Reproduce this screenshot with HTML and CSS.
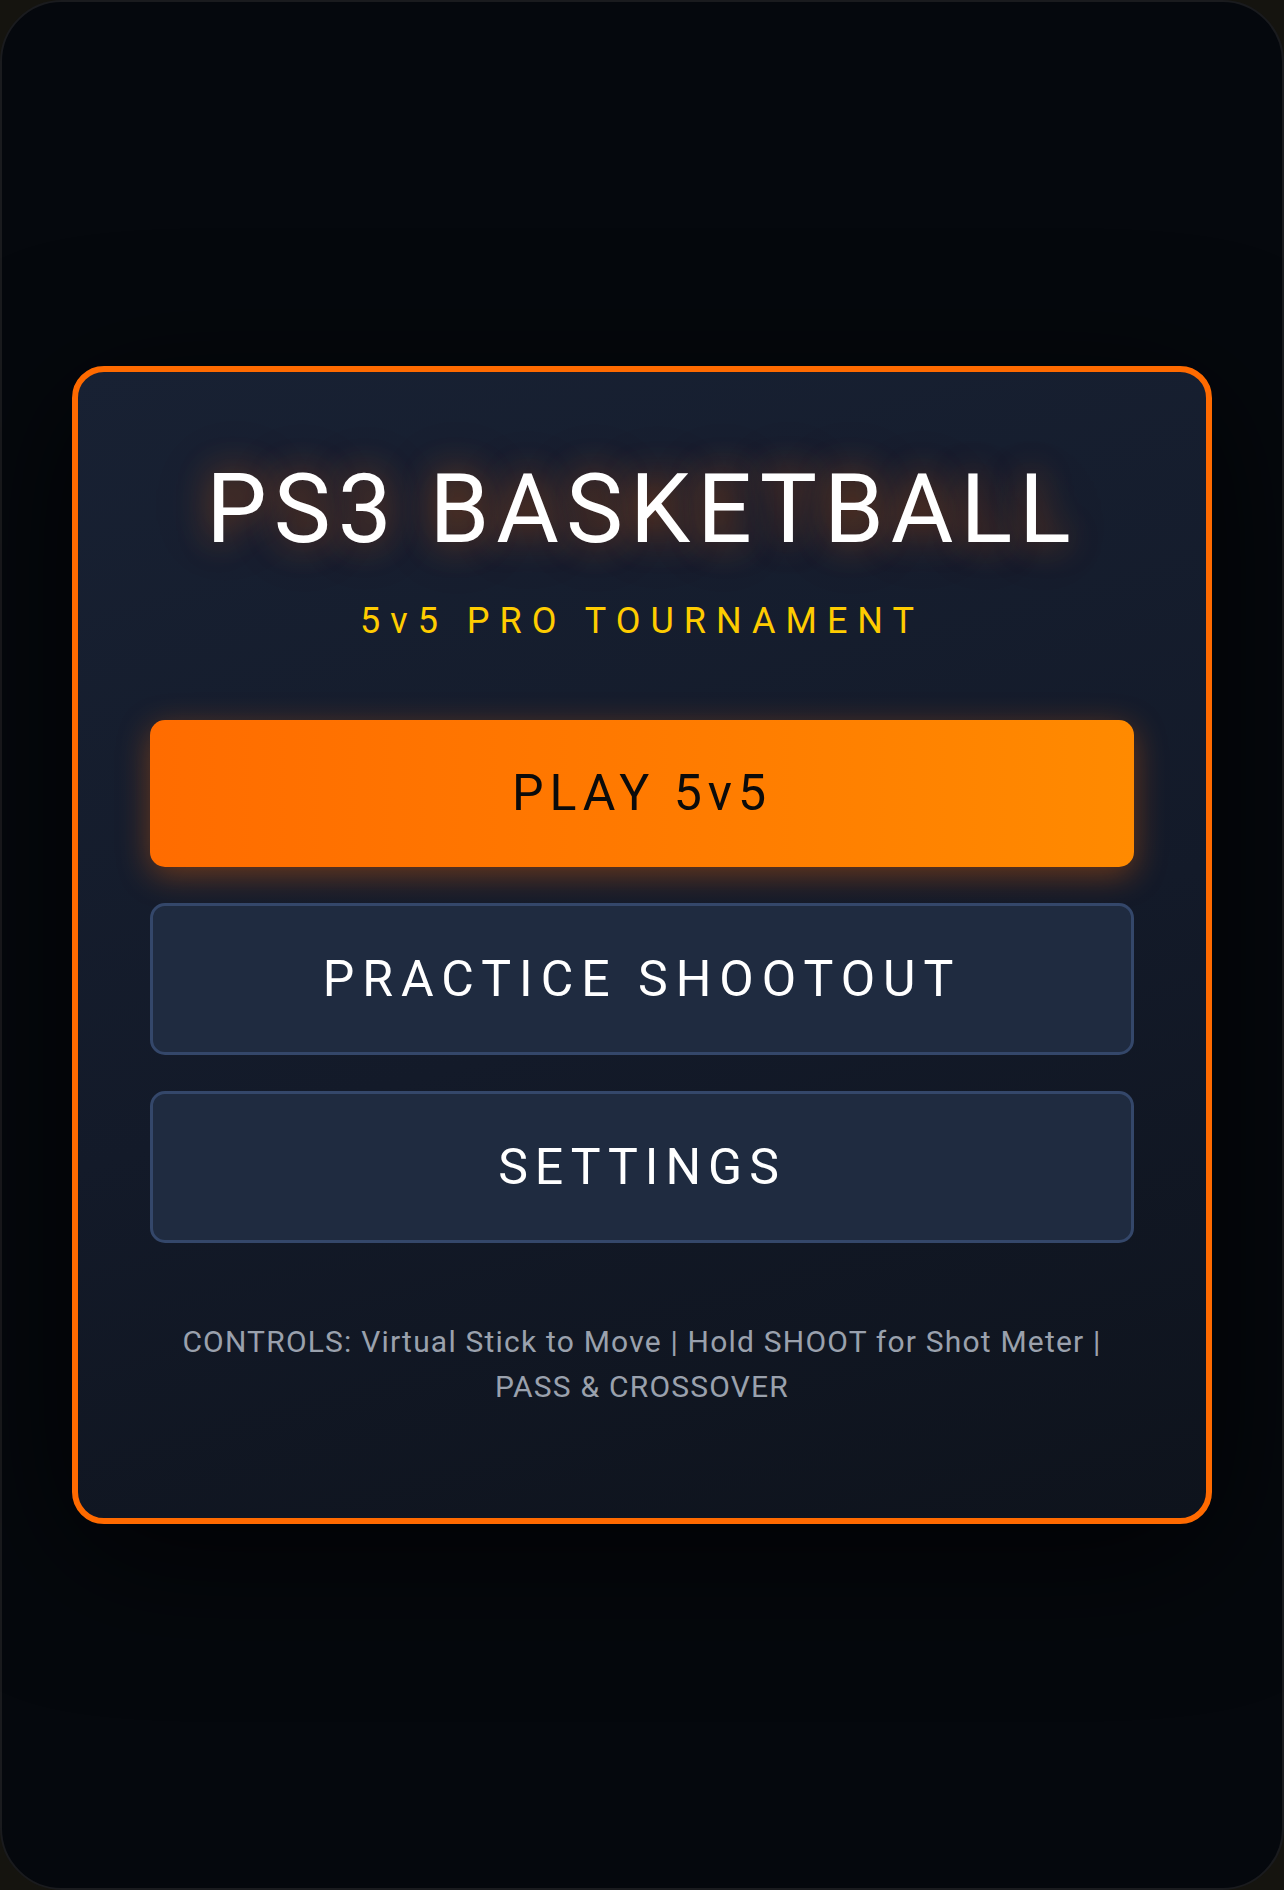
FILE: index.html
```html
<!DOCTYPE html>
<html lang="en">
<head>
<meta charset="utf-8">
<title>PS3 Basketball</title>
<link rel="stylesheet" href="styles.css">
</head>
<body>
<div class="screen">
  <main class="menu-card">
    <h1 class="title">PS3 BASKETBALL</h1>
    <p class="subtitle">5v5 PRO TOURNAMENT</p>
    <div class="menu-buttons">
      <button class="btn btn-primary">PLAY 5v5</button>
      <button class="btn btn-secondary">PRACTICE SHOOTOUT</button>
      <button class="btn btn-secondary">SETTINGS</button>
    </div>
    <p class="controls">CONTROLS: Virtual Stick to Move | Hold SHOOT for Shot Meter | PASS &amp; CROSSOVER</p>
  </main>
</div>
</body>
</html>
```
FILE: styles.css
```css
html, body {
  margin: 0;
  padding: 0;
  background: #15140f;
}

body {
  font-family: Roboto, "Liberation Sans", Arial, sans-serif;
}

.screen {
  box-sizing: border-box;
  height: 1890px;
  border-radius: 62px;
  background: #05080d;
  border: 2px solid #1a1b1e;
  display: flex;
  align-items: center;
  justify-content: center;
}

.menu-card {
  box-sizing: border-box;
  width: 1140px;
  padding: 80px 72px 109px;
  border: 6px solid #ff6a00;
  border-radius: 32px;
  background: linear-gradient(165deg, #182133 0%, #131a29 55%, #0e131c 100%);
  box-shadow: 0 30px 140px rgba(0, 0, 0, 0.75);
  display: flex;
  flex-direction: column;
  align-items: center;
  text-align: center;
}

.title {
  margin: 0;
  font-size: 96px;
  line-height: 115px;
  font-weight: 400;
  letter-spacing: 7px;
  color: #ffffff;
  text-shadow: 0 0 34px rgba(255, 106, 0, 0.45), 0 0 70px rgba(255, 106, 0, 0.18);
  white-space: nowrap;
}

.subtitle {
  margin: 32px 0 0;
  font-size: 36px;
  line-height: 44px;
  letter-spacing: 10px;
  color: #ffcc00;
  white-space: nowrap;
}

.menu-buttons {
  align-self: stretch;
  margin-top: 77px;
  display: flex;
  flex-direction: column;
  gap: 36px;
}

.btn {
  box-sizing: border-box;
  font-family: Roboto, "Liberation Sans", Arial, sans-serif;
  font-size: 50px;
  line-height: 59px;
  font-weight: 400;
  letter-spacing: 7px;
  border-radius: 15px;
  display: flex;
  align-items: center;
  justify-content: center;
  cursor: pointer;
  padding: 0;
}

.btn-primary {
  height: 147px;
  border: none;
  color: #0b0b0b;
  letter-spacing: 6px;
  background: linear-gradient(90deg, #ff6c00 0%, #ff7a00 50%, #ff8a00 100%);
  box-shadow: 0 8px 32px rgba(255, 106, 0, 0.38);
}

.btn-secondary {
  height: 152px;
  border: 3px solid #34476a;
  color: #ffffff;
  background: #1f2b40;
}

.btn-secondary:nth-child(2) {
  letter-spacing: 8px;
}

.controls {
  margin: 76px 0 0;
  max-width: 930px;
  font-size: 30px;
  line-height: 45px;
  letter-spacing: 1.2px;
  color: #9aa1ad;
}
```
